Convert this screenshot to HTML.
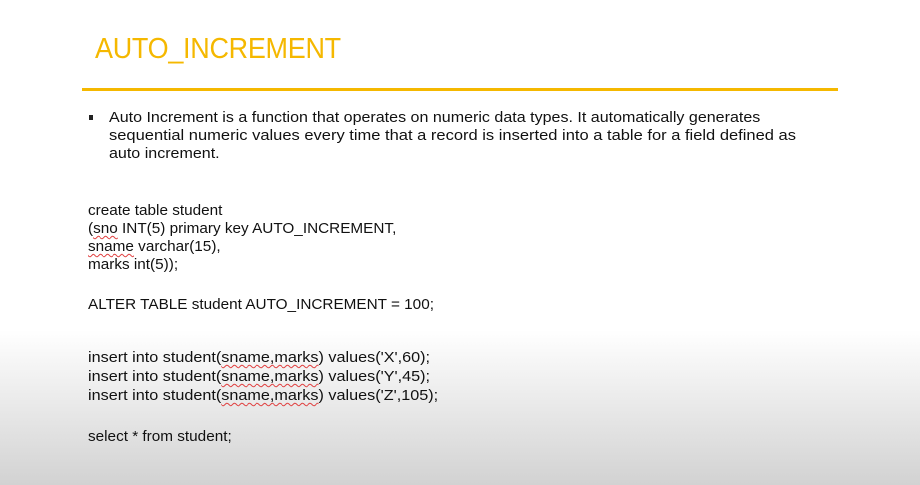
<!DOCTYPE html>
<html><head><meta charset="utf-8"><style>
html,body{margin:0;padding:0}
body{width:920px;height:485px;overflow:hidden;position:relative;font-family:"Liberation Sans",sans-serif;color:#111;
background:linear-gradient(to bottom,#fff 0px,#fff 330px,#d2d2d2 485px);}
.t{position:absolute;white-space:nowrap;transform-origin:0 0;}
.title{left:95px;top:33px;font-size:29px;color:#f5b800;font-weight:300;transform:scaleX(0.93);letter-spacing:-0.3px}
.bar{position:absolute;left:82px;top:88px;width:756px;height:3px;background:#f5b800}
.b{font-size:15px;transform:scaleX(1.07);left:109px}
.c{font-size:15px;transform:scaleX(1.02);left:88px}
.sq{position:absolute;left:89px;top:115px;width:4px;height:5px;background:#222}
u{text-decoration:underline wavy #e04040;text-decoration-thickness:1px;text-underline-offset:2px}
</style></head><body>
<div class="t title">AUTO_INCREMENT</div>
<div class="bar"></div>
<div class="sq"></div>
<div class="t b" style="top:109px">Auto Increment is a function that operates on numeric data types. It automatically generates</div>
<div class="t b" style="top:127px;transform:scaleX(1.1)">sequential numeric values every time that a record is inserted into a table for a field defined as</div>
<div class="t b" style="top:145px">auto increment.</div>
<div class="t c" style="top:202px">create table student</div>
<div class="t c" style="top:220px">(<u>sno</u> INT(5) primary key AUTO_INCREMENT,</div>
<div class="t c" style="top:238px"><u>sname</u> varchar(15),</div>
<div class="t c" style="top:256px">marks int(5));</div>
<div class="t c" style="top:296px">ALTER TABLE student AUTO_INCREMENT = 100;</div>
<div class="t c" style="top:349px;transform:scaleX(1.08)">insert into student(<u>sname,marks</u>) values('X',60);</div>
<div class="t c" style="top:368px;transform:scaleX(1.08)">insert into student(<u>sname,marks</u>) values('Y',45);</div>
<div class="t c" style="top:387px;transform:scaleX(1.08)">insert into student(<u>sname,marks</u>) values('Z',105);</div>
<div class="t c" style="top:428px">select * from student;</div>
</body></html>
